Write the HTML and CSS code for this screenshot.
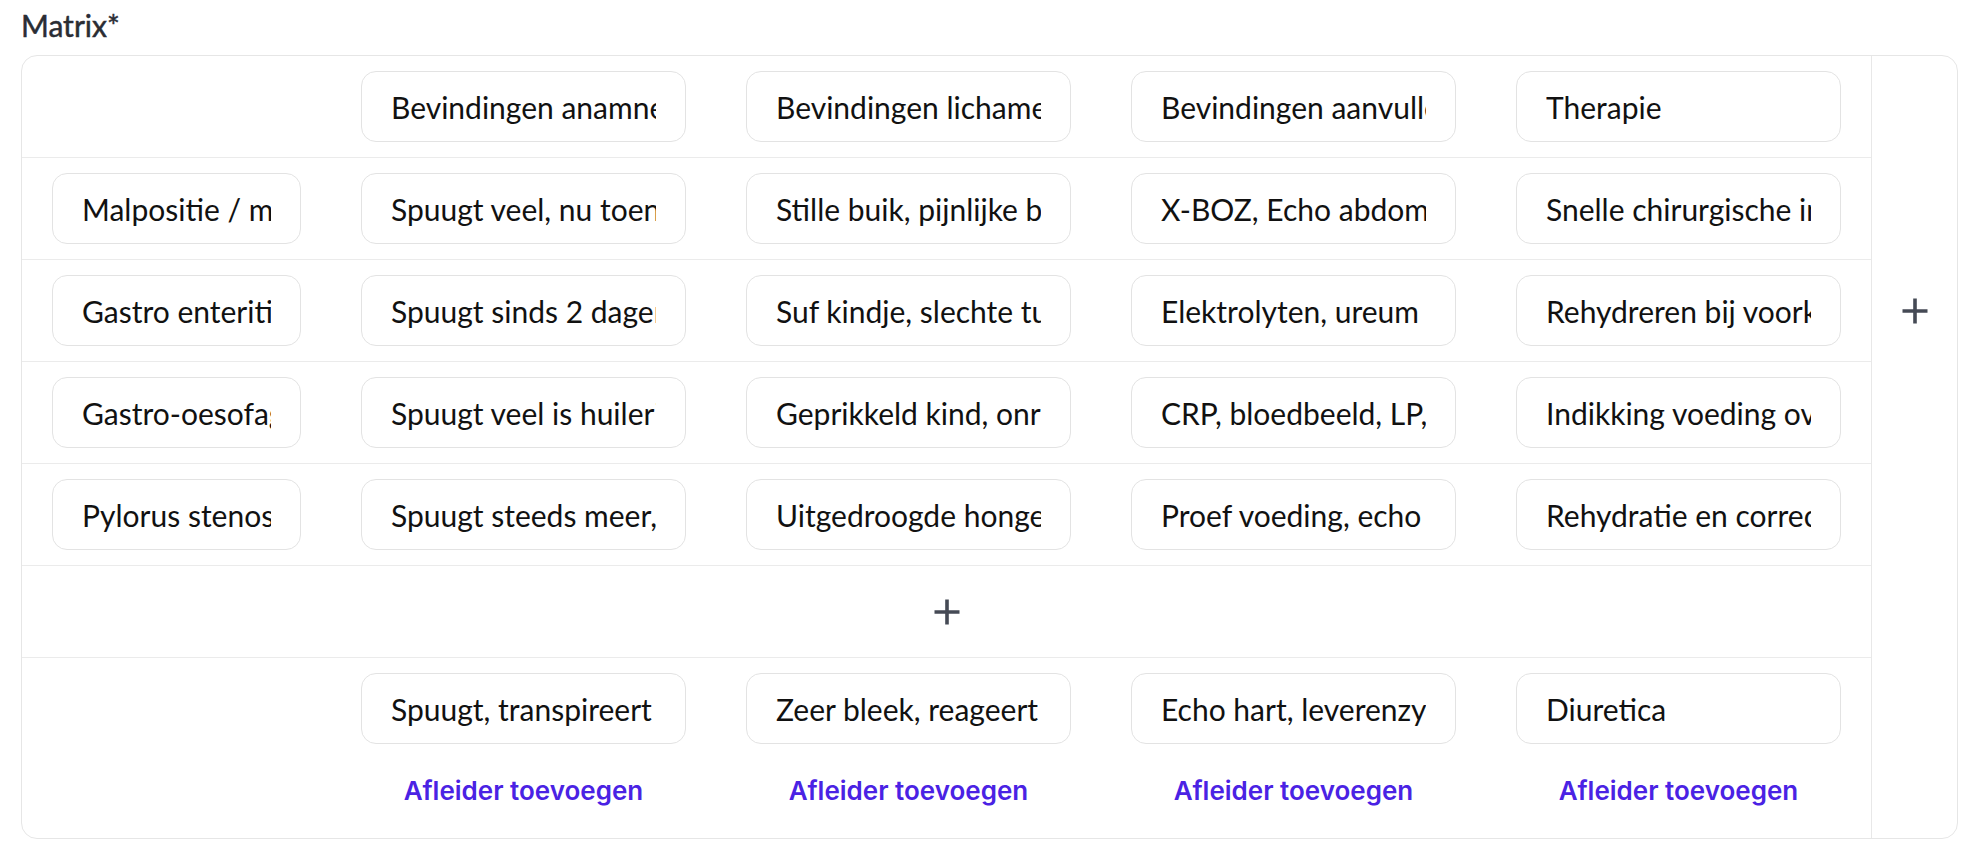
FILE: index.html
```html
<!DOCTYPE html>
<html>
<head>
  <meta charset='UTF-8'>
  <title>Matrix</title>
  <link rel="stylesheet" href="styles.css">
</head>
<body>

  <div class='field'>
    <label class='field-label'>Matrix*</label>

    <div class='matrix'>
      <div class='matrix-rows'>
        <div class='matrix-row'>
          <div class='cell'></div>
          <div class='cell'><input class='cell-input' value='Bevindingen anamnese'></div>
          <div class='cell'><input class='cell-input' value='Bevindingen lichamelijk onderzoek'></div>
          <div class='cell'><input class='cell-input' value='Bevindingen aanvullend onderzoek'></div>
          <div class='cell'><input class='cell-input' value='Therapie'></div>
        </div>
        <div class='matrix-row'>
          <div class='cell'><input class='cell-input' value='Malpositie / malrotatie'></div>
          <div class='cell'><input class='cell-input' value='Spuugt veel, nu toenemend gallig'></div>
          <div class='cell'><input class='cell-input' value='Stille buik, pijnlijke bij palpatie'></div>
          <div class='cell'><input class='cell-input' value='X-BOZ, Echo abdomen'></div>
          <div class='cell'><input class='cell-input' value='Snelle chirurgische interventie'></div>
        </div>
        <div class='matrix-row'>
          <div class='cell'><input class='cell-input' value='Gastro enteritis'></div>
          <div class='cell'><input class='cell-input' value='Spuugt sinds 2 dagen, diarree'></div>
          <div class='cell'><input class='cell-input' value='Suf kindje, slechte turgor'></div>
          <div class='cell'><input class='cell-input' value='Elektrolyten, ureum en creatinine'></div>
          <div class='cell'><input class='cell-input' value='Rehydreren bij voorkeur oraal'></div>
        </div>
        <div class='matrix-row'>
          <div class='cell'><input class='cell-input' value='Gastro-oesofageale reflux'></div>
          <div class='cell'><input class='cell-input' value='Spuugt veel is huilerig'></div>
          <div class='cell'><input class='cell-input' value='Geprikkeld kind, onrustig'></div>
          <div class='cell'><input class='cell-input' value='CRP, bloedbeeld, LP, urine'></div>
          <div class='cell'><input class='cell-input' value='Indikking voeding overwegen'></div>
        </div>
        <div class='matrix-row'>
          <div class='cell'><input class='cell-input' value='Pylorus stenose'></div>
          <div class='cell'><input class='cell-input' value='Spuugt steeds meer, projectiel'></div>
          <div class='cell'><input class='cell-input' value='Uitgedroogde hongerige zuigeling'></div>
          <div class='cell'><input class='cell-input' value='Proef voeding, echo abdomen'></div>
          <div class='cell'><input class='cell-input' value='Rehydratie en correctie'></div>
        </div>
      </div>

      <div class='add-col'>
        <button class='add-btn' title='Kolom toevoegen'>
          <svg width='26' height='26' viewBox='0 0 26 26'><path d='M13 0.5V25.5M0.5 13H25.5' /></svg>
        </button>
      </div>

      <div class='add-row'>
        <button class='add-btn' title='Rij toevoegen'>
          <svg width='26' height='26' viewBox='0 0 26 26'><path d='M13 0.5V25.5M0.5 13H25.5' /></svg>
        </button>
      </div>

      <div class='matrix-row footer-row'>
        <div class='cell'></div>
        <div class='cell'>
          <input class='cell-input' value='Spuugt, transpireert'>
          <a class='add-link' href='#'>Afleider toevoegen</a>
        </div>
        <div class='cell'>
          <input class='cell-input' value='Zeer bleek, reageert'>
          <a class='add-link' href='#'>Afleider toevoegen</a>
        </div>
        <div class='cell'>
          <input class='cell-input' value='Echo hart, leverenzymen'>
          <a class='add-link' href='#'>Afleider toevoegen</a>
        </div>
        <div class='cell'>
          <input class='cell-input' value='Diuretica'>
          <a class='add-link' href='#'>Afleider toevoegen</a>
        </div>
      </div>

      <div class='side-rest'></div>
    </div>
  </div>

</body>
</html>
```

FILE: styles.css
```css
body { margin: 0; padding: 7px 16px 0 21px; background: #fff; font-family: Lato, "Liberation Sans", sans-serif; color: #111; }

.field-label { display: block; font-size: 30px; line-height: 36px; font-weight: 400; -webkit-text-stroke: 0.5px #2a2d34; color: #2a2d34; margin-bottom: 12px; }

.matrix { display: grid; grid-template-columns: 1fr 86px; border: 1px solid #e6e6e6; border-radius: 16px; background: #fff; }
.matrix-rows { grid-column: 1; grid-row: 1; }
.add-col { grid-column: 2; grid-row: 1; border-left: 1px solid #e8e8e8; display: flex; align-items: center; justify-content: center; }
.add-row { grid-column: 1; grid-row: 2; height: 91px; border-bottom: 1px solid #ebebeb; display: flex; align-items: center; justify-content: center; }
.footer-row { grid-column: 1; grid-row: 3; }
.side-rest { grid-column: 2; grid-row: 2 / 4; border-left: 1px solid #e8e8e8; }

.matrix-row { display: grid; grid-template-columns: 249px repeat(4, 325px); column-gap: 60px; padding: 15px 30px; border-bottom: 1px solid #ebebeb; }
.matrix-row.footer-row { border-bottom: none; padding-bottom: 31px; }

.cell { display: flex; flex-direction: column; align-items: stretch; }
.cell-input { box-sizing: border-box; width: 100%; height: 71px; padding: 0 29px; border: 1px solid #e3e3e3; border-radius: 15px; font-family: inherit; font-size: 30px; color: #111; background: #fff; outline: none; }

.add-link { margin-top: 31px; align-self: center; font-family: Inter, "Liberation Sans", sans-serif; font-size: 26px; line-height: 32px; font-weight: 600; color: #4a22e4; text-decoration: none; }

.add-btn { display: flex; padding: 0; border: none; background: none; cursor: pointer; }
.add-btn svg path { stroke: #454a55; stroke-width: 3.6; fill: none; }
```
